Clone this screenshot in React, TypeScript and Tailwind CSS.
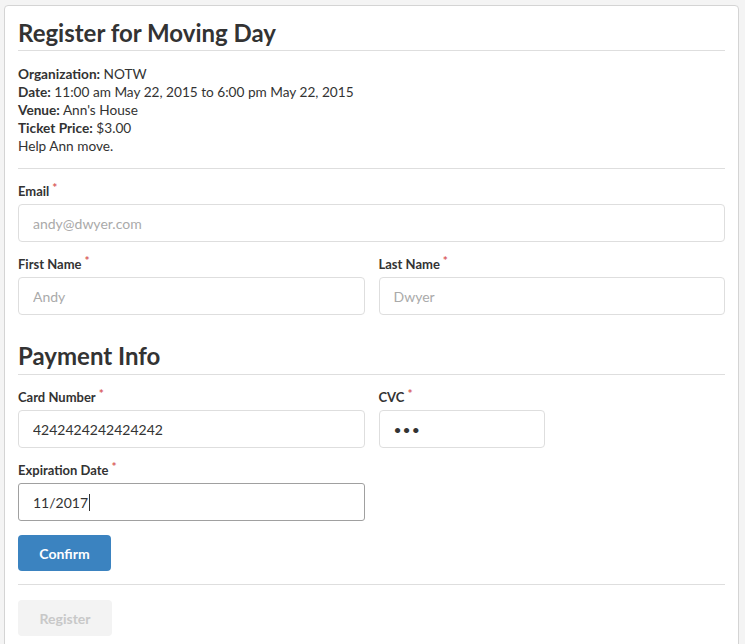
import React from 'react';

function Label({ children }: { children: React.ReactNode }) {
  return (
    <div className="mb-[4px] h-[18px] text-[13px] font-bold leading-[18px] text-[#333]">
      {children}
      <span className="relative -top-[4px] ml-[3px] text-[12px] text-[#d95c5c]">*</span>
    </div>
  );
}

interface FieldProps {
  label: string;
  placeholder?: string;
  value?: string;
  className?: string;
}

function Field({ label, placeholder, value, className = '' }: FieldProps) {
  return (
    <div className={className}>
      <Label>{label}</Label>
      <input
        readOnly
        value={value}
        placeholder={placeholder}
        className="h-[38px] w-full rounded-[4px] border border-[#dedede] bg-white px-[14px] text-[14px] text-[#333] outline-none placeholder:text-[#aaa]"
      />
    </div>
  );
}

export default function App() {
  return (
    <div className="min-h-screen bg-[#f4f4f4] pt-[5px] font-['Lato','Open_Sans',sans-serif] text-[#333]">
      <div className="ml-[4px] w-[735px] rounded-[4px] border border-[#d4d4d4] bg-white px-[13px] pb-[20px]">
        <h2 className="mt-[12px] border-b border-[#dedede] pb-[2px] text-[24px] font-bold leading-[30px]">
          Register for Moving Day
        </h2>

        <div className="mt-[14px] text-[13.65px] leading-[18px]">
          <div><b>Organization:</b> NOTW</div>
          <div><b>Date:</b> 11:00 am May 22, 2015 to 6:00 pm May 22, 2015</div>
          <div><b>Venue:</b> Ann's House</div>
          <div><b>Ticket Price:</b> $3.00</div>
          <div>Help Ann move.</div>
        </div>

        <div className="mt-[13px] border-t border-[#dedede]" />

        <Field className="mt-[13px]" label="Email" placeholder="andy@dwyer.com" />

        <div className="mt-[13px] grid grid-cols-2 gap-[14px]">
          <Field label="First Name" placeholder="Andy" />
          <Field label="Last Name" placeholder="Dwyer" />
        </div>

        <h2 className="mt-[26px] border-b border-[#dedede] pb-[3px] text-[24px] font-bold leading-[30px]">
          Payment Info
        </h2>

        <div className="mt-[13px] grid grid-cols-2 gap-[14px]">
          <Field label="Card Number" value="4242424242424242" />
          <div>
            <Label>CVC</Label>
            <div className="flex h-[38px] w-[166px] items-center rounded-[4px] border border-[#dedede] px-[14px] text-[14px] tracking-[1px]">
              •••
            </div>
          </div>
        </div>

        <div className="mt-[13px] w-[347px]">
          <Label>Expiration Date</Label>
          <div className="flex h-[38px] items-center rounded-[3px] border border-[#a0a0a0] px-[14px] text-[14px]">
            11/2017
            <span className="ml-[1px] h-[17px] w-px bg-[#333]" />
          </div>
        </div>

        <button className="mt-[14px] h-[36px] w-[93px] rounded-[4px] bg-[#3b83c0] text-[14px] font-bold text-white">
          Confirm
        </button>

        <div className="mt-[13px] border-t border-[#dedede]" />

        <button className="mt-[15px] h-[36px] w-[94px] rounded-[4px] bg-[#f3f3f3] text-[14px] font-bold text-[#c8c8c8]">
          Register
        </button>
      </div>
    </div>
  );
}
